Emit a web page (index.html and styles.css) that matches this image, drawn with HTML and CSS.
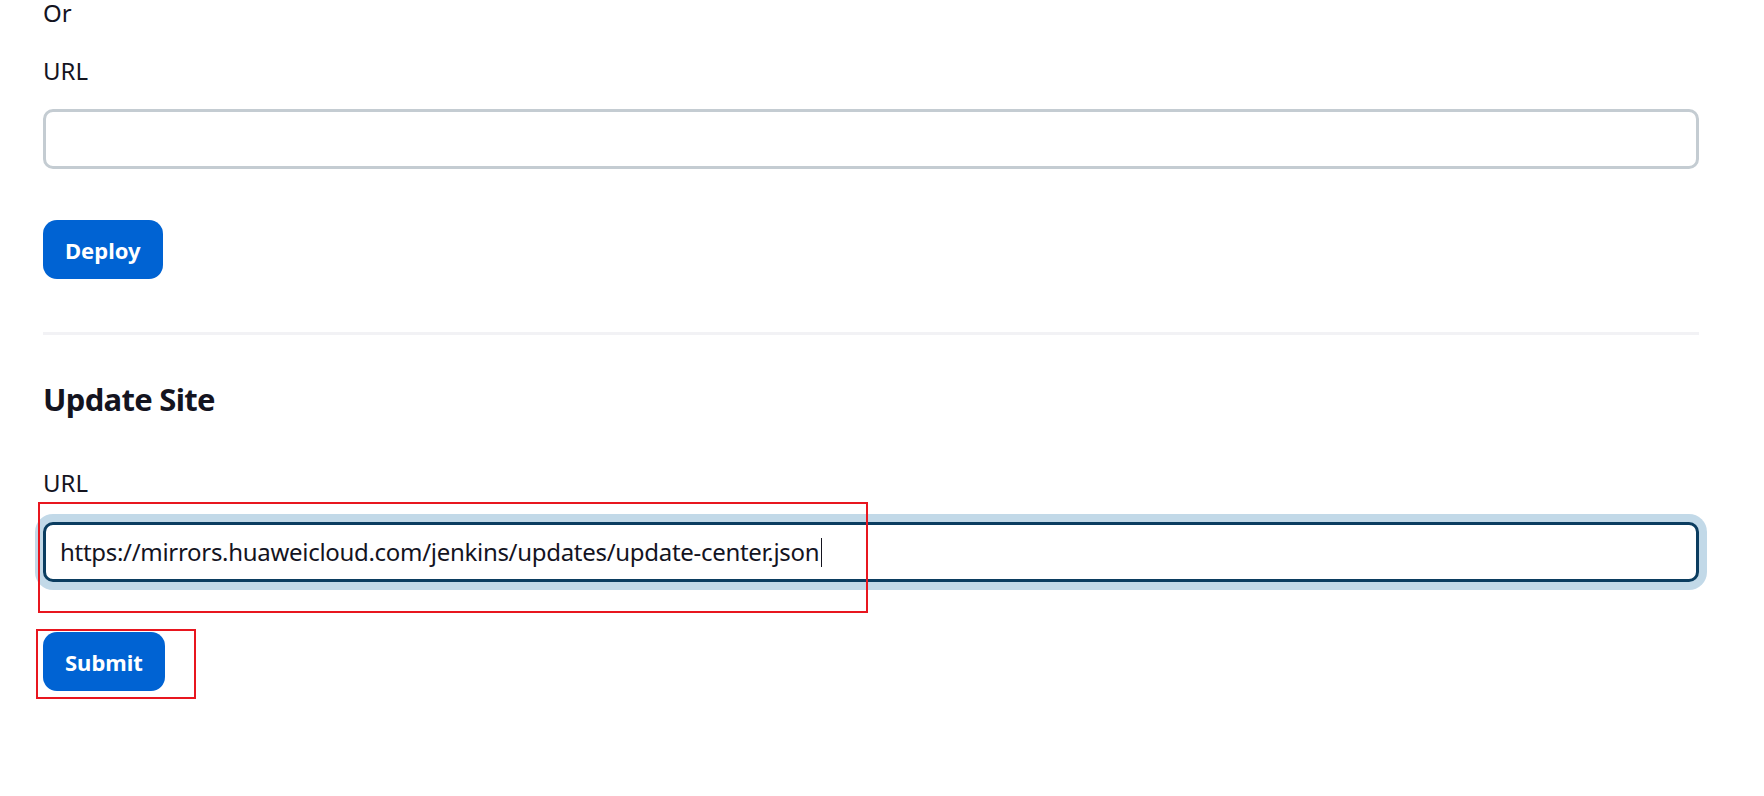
FILE: index.html
```html
<!DOCTYPE html>
<html lang="en">
<head>
<meta charset="utf-8">
<title>Advanced settings</title>
<link rel="stylesheet" href="styles.css">
</head>
<body>
<main class="page">
  <p class="or">Or</p>
  <div class="field">
    <label class="label">URL</label>
    <div class="input"></div>
  </div>
  <button class="btn btn-first">Deploy</button>
  <hr class="sep">
  <h2 class="title">Update Site</h2>
  <div class="field field-second">
    <label class="label">URL</label>
    <div class="input input-focus"><span class="value">https://mirrors.huaweicloud.com/jenkins/updates/update-center.json</span><span class="caret"></span></div>
  </div>
  <button class="btn btn-second">Submit</button>
  <div class="annot annot-input"></div>
  <div class="annot annot-button"></div>
</main>
</body>
</html>
```

FILE: styles.css
```css
html, body {
  margin: 0;
  padding: 0;
  background: #ffffff;
}

body {
  font-family: "Noto Sans", "Open Sans", sans-serif;
  color: #14141f;
  font-size: 24px;
  line-height: 36px;
}

.page {
  position: relative;
  display: flex;
  flex-direction: column;
  align-items: flex-start;
  padding: 0 65px 0 43px;
  min-height: 796px;
  box-sizing: border-box;
}

.or {
  margin: 0;
  line-height: 26px;
}

.field {
  display: flex;
  flex-direction: column;
  align-self: stretch;
  margin-top: 27px;
}

.field-second {
  margin-top: 46px;
}

.label {
  display: block;
  margin-bottom: 20px;
}

.field-second .label {
  margin-bottom: 21px;
}

.input {
  box-sizing: border-box;
  height: 60px;
  border: 3px solid #c4ccd2;
  border-radius: 10px;
  background: #fff;
  padding: 0 14px;
  display: flex;
  align-items: center;
}

.input-focus {
  border-color: #0b3d60;
  box-shadow: 0 0 0 8px #c2d9e8;
}

.value {
  white-space: nowrap;
  letter-spacing: -0.3px;
}

.caret {
  display: inline-block;
  width: 1px;
  height: 29px;
  background: #14141f;
  margin-left: 2px;
}

.btn {
  box-sizing: border-box;
  height: 59px;
  padding: 0 22px;
  border: none;
  border-radius: 14px;
  background: #0063d3;
  color: #ffffff;
  font-family: "Noto Sans", "Open Sans", sans-serif;
  font-size: 22px;
  font-weight: 700;
  letter-spacing: 0;
}

.btn-first {
  margin-top: 51px;
}

.btn-second {
  margin-top: 50px;
}

.sep {
  align-self: stretch;
  margin: 53px 0 0 0;
  height: 3px;
  border: none;
  background: #f2f2f5;
}

.title {
  margin: 44px 0 0 0;
  font-size: 31px;
  line-height: 40px;
  font-weight: 700;
  letter-spacing: -0.7px;
}

.annot {
  position: absolute;
  box-sizing: border-box;
  border: 2px solid #e8161f;
}

.annot-input {
  left: 38px;
  top: 502px;
  width: 830px;
  height: 111px;
}

.annot-button {
  left: 36px;
  top: 629px;
  width: 160px;
  height: 70px;
}
```
